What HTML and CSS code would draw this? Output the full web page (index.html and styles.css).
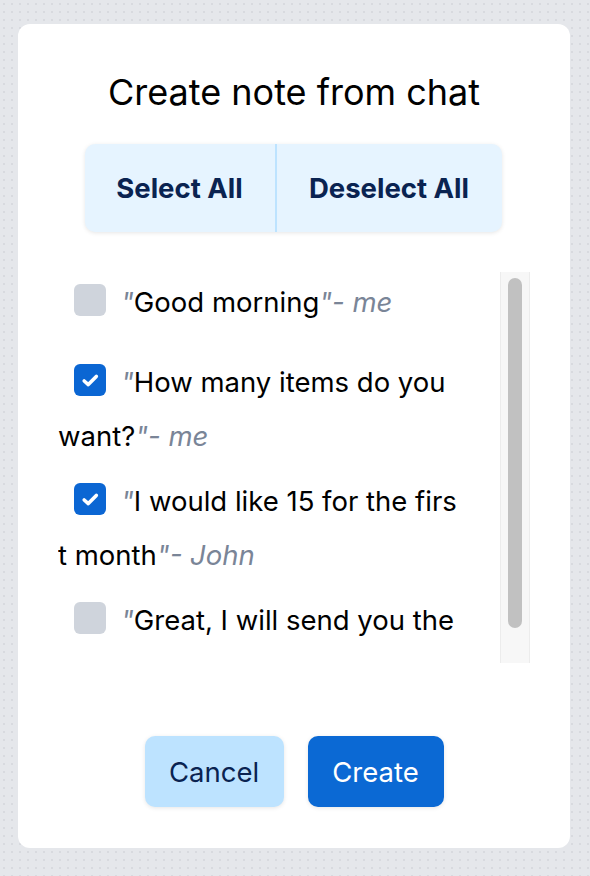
FILE: index.html
```html
<!DOCTYPE html>
<html lang="en">
<head>
<meta charset="utf-8">
<title>Create note from chat</title>
<link rel="stylesheet" href="styles.css">
</head>
<body>
<div class="card">
  <h1 class="title">Create note from chat</h1>
  <div class="seg">
    <button class="seg-btn">Select All</button>
    <button class="seg-btn">Deselect All</button>
  </div>
  <div class="scroll-area">
    <div class="list">
      <label class="item first">
        <span class="box"></span><span class="q">"</span>Good morning<span class="q">"- me</span>
      </label>
      <label class="item">
        <span class="box on"><svg viewBox="0 0 32 32" width="32" height="32"><path d="M10.2 17l4.1 3.6 8-8.2" fill="none" stroke="#fff" stroke-width="3.6" stroke-linecap="round" stroke-linejoin="round"/></svg></span><span class="q">"</span>How many items do you want?<span class="q">"- me</span>
      </label>
      <label class="item">
        <span class="box on"><svg viewBox="0 0 32 32" width="32" height="32"><path d="M10.2 17l4.1 3.6 8-8.2" fill="none" stroke="#fff" stroke-width="3.6" stroke-linecap="round" stroke-linejoin="round"/></svg></span><span class="q">"</span>I would like 15 for the first month<span class="q">"- John</span>
      </label>
      <label class="item">
        <span class="box"></span><span class="q">"</span>Great, I will send you the invoice<span class="q">"- me</span>
      </label>
    </div>
    <div class="track"><div class="thumb"></div></div>
  </div>
  <div class="actions">
    <button class="btn cancel">Cancel</button>
    <button class="btn create">Create</button>
  </div>
</div>
</body>
</html>
```

FILE: styles.css
```css
* { box-sizing: border-box; }
html, body { margin: 0; padding: 0; }
body {
  width: 590px;
  height: 876px;
  background-color: #e5e7eb;
  background-image: radial-gradient(circle, #d8dadf 1px, transparent 1.3px);
  background-size: 8px 8px;
  font-family: Inter, "Noto Sans", sans-serif;
  padding: 24px 20px 28px 18px;
  overflow: hidden;
}
.card {
  width: 552px;
  height: 824px;
  background: #fff;
  border-radius: 12px;
  padding: 0 40px;
  display: flex;
  flex-direction: column;
  align-items: center;
}
.title {
  margin: 46px 0 0;
  font-size: 36px;
  font-weight: 400;
  color: #000;
  line-height: 44px;
  text-align: center;
  white-space: nowrap;
}
.seg {
  margin-top: 30px;
  margin-left: -2px;
  width: 417px;
  height: 88px;
  display: flex;
  background: #e6f4ff;
  border-radius: 10px;
  box-shadow: 0 1px 4px rgba(0, 0, 0, 0.1);
  overflow: hidden;
}
.seg-btn {
  border: 0;
  background: transparent;
  font-family: inherit;
  font-size: 27.5px;
  font-weight: 700;
  color: #0a2351;
  padding: 0;
}
.seg-btn:first-child {
  width: 192px;
  border-right: 2px solid #bde3ff;
}
.seg-btn:last-child { flex: 1; }
.scroll-area {
  margin-top: 40px;
  width: 472px;
  height: 391px;
  display: flex;
}
.list {
  flex: 1;
  overflow: hidden;
  padding-right: 37px;
  font-size: 27.5px;
  color: #000;
}
.track {
  width: 30px;
  background: #f7f7f7;
  border-left: 1px solid #ececec;
  border-right: 1px solid #ececec;
  padding: 6px 7px;
}
.thumb {
  height: 350px;
  background: #c1c1c1;
  border-radius: 8px;
}
.item {
  display: block;
  line-height: 54px;
  word-break: break-all;
  margin-bottom: 11px;
}
.item.first { margin-bottom: 26px; }
.item:first-child { margin-top: 3px; }
.box {
  display: inline-block;
  vertical-align: -4px;
  width: 32px;
  height: 32px;
  border-radius: 6px;
  background: #cfd4dc;
  margin: 0 15px 0 16px;
}
.box.on { background: #0b66d3; }
.box svg { display: block; }
.q {
  font-style: italic;
  color: #7a8597;
}
.actions {
  margin-top: auto;
  margin-bottom: 41px;
  display: flex;
  gap: 24px;
}
.btn {
  height: 71px;
  border: 0;
  border-radius: 10px;
  font-family: inherit;
  font-size: 27.5px;
  padding: 0;
  box-shadow: 0 1px 4px rgba(0, 0, 0, 0.1);
}
.cancel { width: 139px; background: #bde3ff; color: #0a2351; }
.create { width: 136px; background: #0b69d4; color: #fff; }
```
